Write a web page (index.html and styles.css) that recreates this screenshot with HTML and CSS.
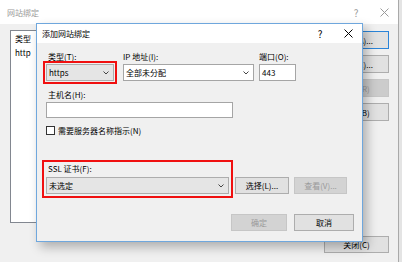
FILE: index.html
```html
<!DOCTYPE html>
<html lang="zh-CN">

<head>
    <meta charset="UTF-8">
    <meta name="viewport" content="width=device-width, initial-scale=1.0">
    <title>网站绑定</title>
    <link rel="stylesheet" href="styles.css">
</head>

<body>
    <!-- parent window: site bindings -->
    <div class="window back-window">
        <div class="title-bar inactive">
            <span class="title">网站绑定</span>
            <span class="title-btn">?</span>
            <span class="title-btn">
                <svg width="9" height="9" viewBox="0 0 9 9"><path d="M0.5 0.5L8.5 8.5M8.5 0.5L0.5 8.5" stroke="#9a9a9a" stroke-width="1" fill="none"/></svg>
            </span>
        </div>
        <div class="back-body">
            <div class="back-main">
                <div class="binding-list">
                    <div class="list-head">类型</div>
                    <div class="list-row">http</div>
                </div>
                <div class="side-buttons">
                    <button class="btn default" type="button">添加(A)...</button>
                    <button class="btn" type="button">编辑(E)...</button>
                    <button class="btn" type="button" disabled>删除(R)</button>
                    <button class="btn" type="button">浏览(B)</button>
                </div>
            </div>
            <div class="back-footer">
                <button class="btn close-btn" type="button">关闭(C)</button>
            </div>
        </div>
    </div>

    <!-- add binding dialog -->
    <div class="window dialog">
        <div class="title-bar">
            <span class="title">添加网站绑定</span>
            <span class="title-btn">?</span>
            <span class="title-btn">
                <svg width="9" height="9" viewBox="0 0 9 9"><path d="M0.5 0.5L8.5 8.5M8.5 0.5L0.5 8.5" stroke="#000" stroke-width="1" fill="none"/></svg>
            </span>
        </div>
        <div class="dlg-body">
            <div class="row-top">
                <div class="field type-field">
                    <label class="lbl">类型(T):</label>
                    <div class="combo marked">
                        <span class="combo-text">https</span>
                        <svg class="chev" width="6" height="4" viewBox="0 0 6 4"><polyline points="0.5,0.5 3,3 5.5,0.5" stroke="#444" fill="none"/></svg>
                    </div>
                </div>
                <div class="field ip-field">
                    <label class="lbl">IP 地址(I):</label>
                    <div class="combo editable">
                        <span class="combo-text">全部未分配</span>
                        <svg class="chev" width="6" height="4" viewBox="0 0 6 4"><polyline points="0.5,0.5 3,3 5.5,0.5" stroke="#444" fill="none"/></svg>
                    </div>
                </div>
                <div class="field port-field">
                    <label class="lbl">端口(O):</label>
                    <div class="textbox">443</div>
                </div>
            </div>

            <label class="lbl host-lbl">主机名(H):</label>
            <div class="textbox host-box"></div>

            <div class="check-row">
                <span class="checkbox"></span>
                <span>需要服务器名称指示(N)</span>
            </div>

            <div class="ssl-row">
                <div class="ssl-group marked">
                    <label class="lbl">SSL 证书(F):</label>
                    <div class="combo">
                        <span class="combo-text">未选定</span>
                        <svg class="chev" width="6" height="4" viewBox="0 0 6 4"><polyline points="0.5,0.5 3,3 5.5,0.5" stroke="#444" fill="none"/></svg>
                    </div>
                </div>
                <button class="btn select-btn" type="button">选择(L)...</button>
                <button class="btn view-btn" type="button" disabled>查看(V)...</button>
            </div>

            <div class="dlg-footer">
                <button class="btn ok-btn" type="button" disabled>确定</button>
                <button class="btn cancel-btn" type="button">取消</button>
            </div>
        </div>
    </div>
</body>

</html>
```

FILE: styles.css
```css
* {
    box-sizing: border-box;
}

body {
    margin: 0;
    width: 402px;
    height: 262px;
    overflow: hidden;
    position: relative;
    background-color: #e4e4e4;
    font-family: "Noto Sans CJK SC", sans-serif;
    font-size: 8px;
    color: #000;
}

.window {
    position: absolute;
    background-color: #f0f0f0;
}

/* title bars */
.title-bar {
    display: flex;
    align-items: center;
    background-color: #fff;
}

.title-bar .title {
    flex: 1;
}

.title-btn {
    width: 28px;
    display: flex;
    justify-content: center;
    align-items: center;
    font-size: 10px;
}

.title-bar.inactive {
    color: #9a9a9a;
}

/* parent window */
.back-window {
    left: -1px;
    top: -1px;
    width: 400px;
    height: 264px;
    border: 1px solid #a9a9a9;
}

.back-window .title-bar {
    height: 24px;
    padding-left: 7px;
}

.back-body {
    padding: 6px 9px 0 10px;
}

.back-main {
    display: flex;
    height: 193px;
}

.binding-list {
    flex: 1;
    background-color: #fff;
    border: 1px solid #828790;
}

.list-head {
    line-height: 15px;
    padding-left: 4px;
}

.list-row {
    line-height: 14px;
    padding-left: 4px;
}

.side-buttons {
    width: 65px;
    margin-left: 8px;
    padding-top: 1px;
    display: flex;
    flex-direction: column;
    gap: 6px;
}

.side-buttons .btn {
    height: 18px;
}

.back-footer {
    display: flex;
    justify-content: flex-end;
    margin-top: 13px;
}

.close-btn {
    width: 65px;
}

/* dialog */
.dialog {
    left: 36px;
    top: 23px;
    width: 327px;
    height: 219px;
    border: 1px solid #6fa7dd;
    box-shadow: 4px 5px 10px rgba(0, 0, 0, 0.28);
}

.dialog .title-bar {
    height: 19px;
    padding-left: 5px;
}

.dlg-body {
    padding: 9px 8px 0 9px;
}

.lbl {
    display: block;
    line-height: 10px;
    height: 10px;
    padding-left: 2px;
    margin-bottom: 2px;
}

.row-top {
    display: flex;
}

.type-field {
    width: 68px;
}

.ip-field {
    width: 131px;
    margin-left: 9px;
}

.ip-field .lbl,
.port-field .lbl {
    padding-left: 0;
}

.port-field {
    width: 37px;
    margin-left: 5px;
}

.combo {
    display: flex;
    align-items: center;
    height: 17px;
    border: 1px solid #adadad;
    background-color: #e5e5e5;
    padding: 0 4px 0 2px;
}

.combo-text {
    flex: 1;
}

.combo.editable {
    background-color: #fff;
    border-color: #a5a5a5;
}

.chev {
    display: block;
}

.textbox {
    height: 17px;
    line-height: 15px;
    padding-left: 2px;
    background-color: #fff;
    border: 1px solid #a5a5a5;
}

.marked {
    outline: 2px solid #f01010;
    outline-offset: 1px;
}

.host-lbl {
    margin-top: 9px;
}

.host-box {
    width: 187px;
    height: 16px;
}

.check-row {
    display: flex;
    align-items: center;
    gap: 3px;
    height: 10px;
    margin-top: 7px;
}

.checkbox {
    width: 9px;
    height: 9px;
    border: 1px solid #333;
    background-color: #fff;
}

.ssl-row {
    display: flex;
    align-items: flex-end;
    margin-top: 29px;
}

.ssl-group {
    width: 183px;
    outline-offset: 2px;
}

.ssl-group .lbl {
    margin-bottom: 3px;
}

.btn {
    font: inherit;
    height: 17px;
    padding: 0;
    color: #000;
    background-color: #e1e1e1;
    border: 1px solid #adadad;
    white-space: nowrap;
}

.btn.default {
    border-color: #2a84d8;
}

.btn:disabled {
    background-color: #d3d3d3;
    border-color: #c6c6c6;
    color: #9a9a9a;
}

.side-buttons .btn:disabled {
    background-color: #cccccc;
}

.select-btn {
    width: 54px;
    margin-left: 6px;
}

.view-btn {
    width: 53px;
    margin-left: 5px;
}

.dlg-footer {
    display: flex;
    justify-content: flex-end;
    margin-top: 20px;
}

.ok-btn {
    width: 56px;
}

.cancel-btn {
    width: 60px;
    margin-left: 7px;
}
```
